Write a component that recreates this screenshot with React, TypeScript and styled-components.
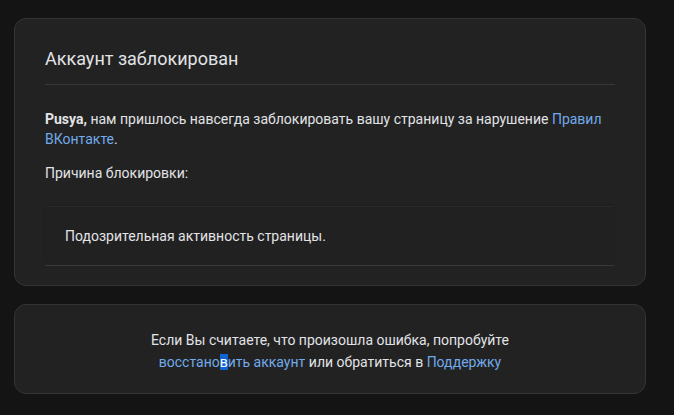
import React from "react";
import styled, { createGlobalStyle } from "styled-components";

const Global = createGlobalStyle`
  html, body { margin: 0; padding: 0; background: #141414; }
  body { font-family: Roboto, "Noto Sans", "Liberation Sans", sans-serif; color: #e1e3e6; }
`;

const Page = styled.div`
  display: flex;
  flex-direction: column;
  gap: 18px;
  padding: 18px 28px 20px 14px;
`;

const Card = styled.section<{ $center?: boolean }>`
  background: #222222;
  border: 1px solid #343434;
  border-radius: 12px;
  padding: ${(p) => (p.$center ? "24px 30px 20px" : "20px 30px 19px")};
  text-align: ${(p) => (p.$center ? "center" : "left")};
  font-size: 14px;
  line-height: 20px;
`;

const Title = styled.h1`
  margin: 0;
  font-size: 18px;
  font-weight: 400;
  line-height: 40px;
  padding-bottom: 5px;
  border-bottom: 1px solid #383838;
  color: #e1e3e6;
`;

const Text = styled.p<{ $gap: number }>`
  margin: 0;
  padding-top: ${(p) => p.$gap}px;
`;

const Bold = styled.b`
  font-weight: 700;
`;

const Link = styled.a`
  color: #71aaeb;
  text-decoration: none;
`;

const Selected = styled.span`
  background: #0f64d2;
  color: #ffffff;
`;

const ReasonBox = styled.div`
  margin-top: 23px;
  background: #212121;
  border-top: 1px solid #2a2a2a;
  border-bottom: 1px solid #3a3a3a;
  box-shadow: 0 -1px 2px rgba(0, 0, 0, 0.15);
  border-radius: 2px;
  padding: 19px 20px;
`;

const BottomText = styled.p`
  margin: 0;
  line-height: 22px;
`;

export default function App() {
  return (
    <>
      <Global />
      <Page>
        <Card>
          <Title>Аккаунт заблокирован</Title>
          <Text $gap={24}>
            <Bold>Pusya,</Bold> нам пришлось навсегда заблокировать вашу страницу за нарушение{" "}
            <Link href="#">Правил ВКонтакте</Link>.
          </Text>
          <Text $gap={14}>Причина блокировки:</Text>
          <ReasonBox>Подозрительная активность страницы.</ReasonBox>
        </Card>
        <Card $center>
          <BottomText>
            Если Вы считаете, что произошла ошибка, попробуйте
            <br />
            <Link href="#">
              восстано<Selected>в</Selected>ить аккаунт
            </Link>{" "}
            или обратиться в <Link href="#">Поддержку</Link>
          </BottomText>
        </Card>
      </Page>
    </>
  );
}
